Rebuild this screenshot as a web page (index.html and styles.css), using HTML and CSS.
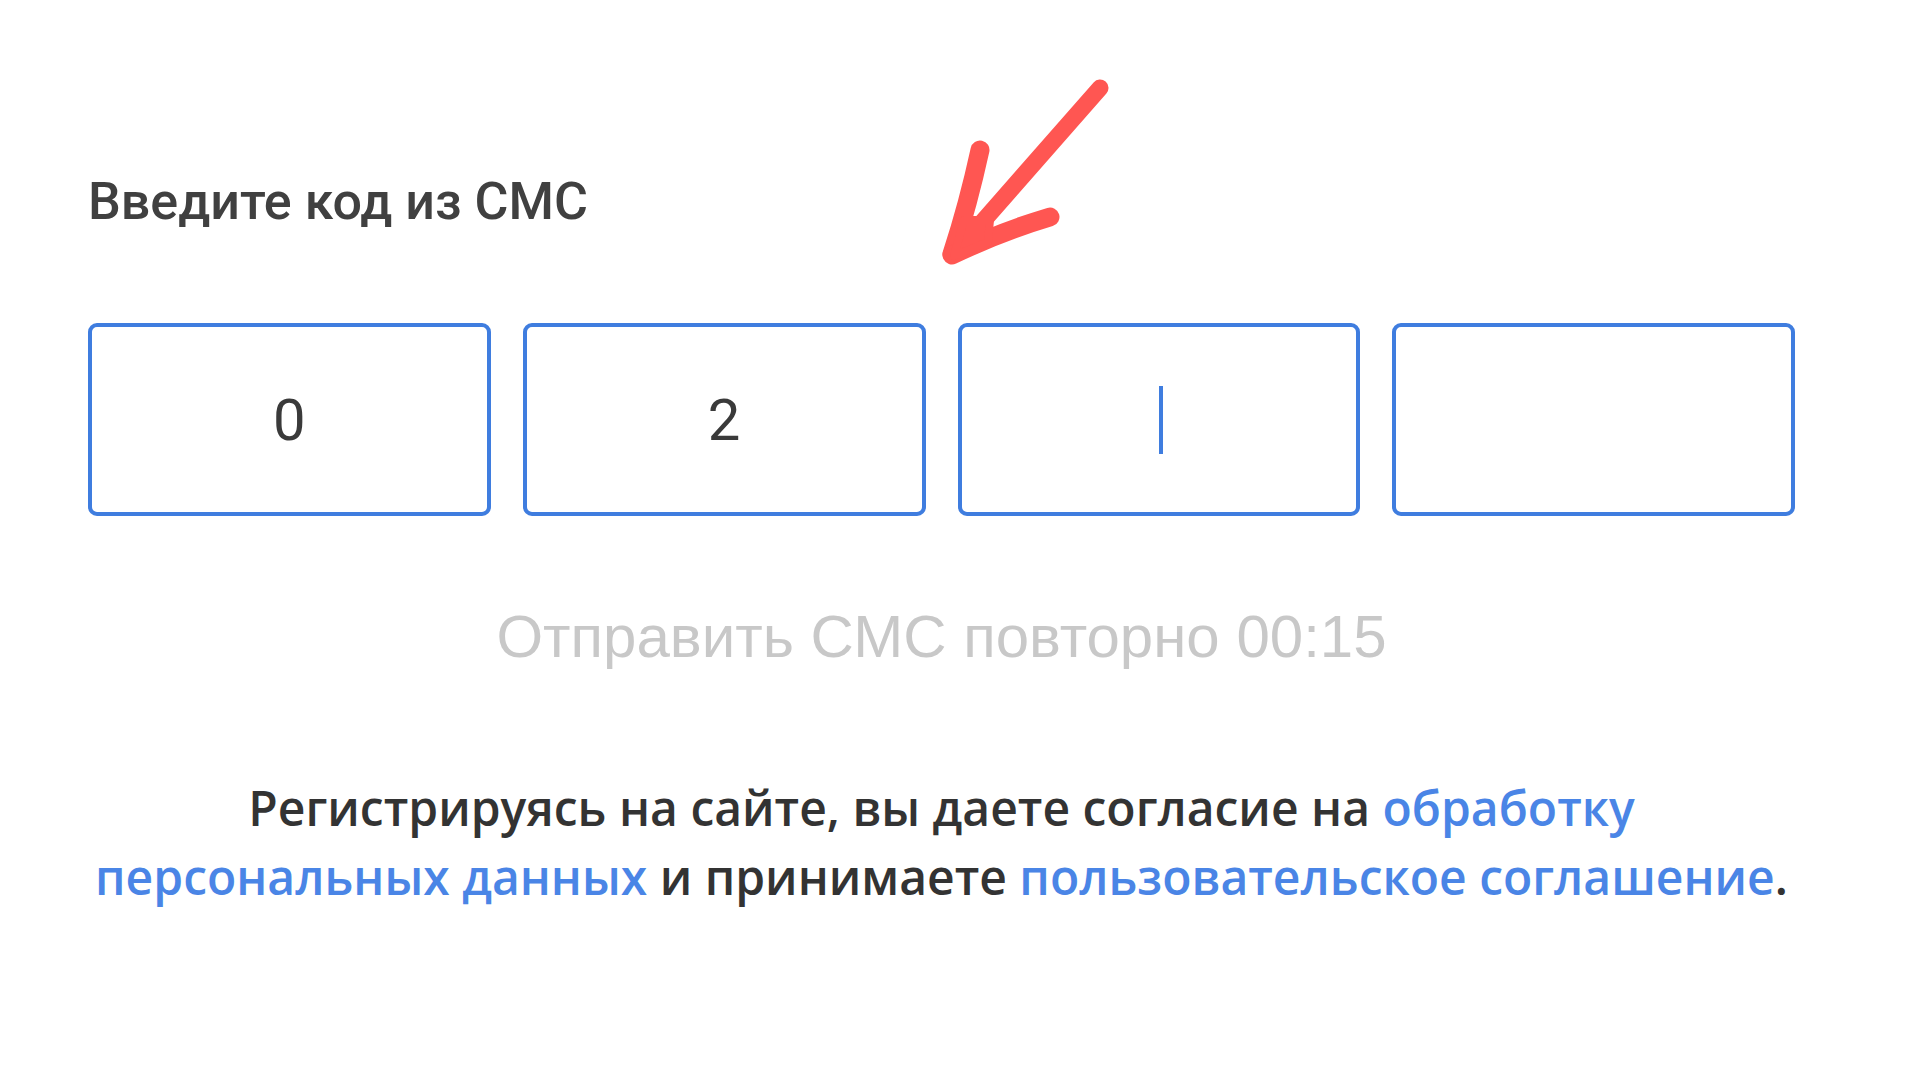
FILE: index.html
```html
<!DOCTYPE html>
<html>
<head>
    <title>Подтверждение номера</title>
    <link rel="stylesheet" href="styles.css">
</head>
<body>
    <div class="sms-form">
        <div class="label">Введите код из СМС</div>
        <div class="code-inputs">
            <div class="code-cell">0</div>
            <div class="code-cell">2</div>
            <div class="code-cell active"><span class="caret"></span></div>
            <div class="code-cell"></div>
        </div>
        <div class="resend">Отправить СМС повторно 00:15</div>
        <p class="agreement">
            Регистрируясь на сайте, вы даете согласие на <a href="#">обработку</a><br>
            <a href="#">персональных данных</a> и принимаете <a href="#">пользовательское соглашение</a>.
        </p>

        <!-- hint arrow -->
        <svg class="hint-arrow" width="200" height="210" viewBox="0 0 200 210">
            <path d="M170 18 Q 100 98 26 182" />
            <path class="barb" d="M50 80 Q 38 135 22 184" />
            <path class="barb" d="M120 147 Q 70 162 22 185" />
            <path class="head" d="M24 186 L 34 150 L 60 150 L 58 172 Z" />
        </svg>
    </div>
</body>
</html>
```

FILE: styles.css
```css
body {
    margin: 0;
    background: #fff;
    font-family: Roboto, "Liberation Sans", sans-serif;
}
.sms-form {
    position: relative;
    width: 1707px;
    padding: 172px 0 0 88px;
}
.label {
    font-size: 52px;
    line-height: 60px;
    font-weight: 500;
    color: #404040;
}
.code-inputs {
    display: grid;
    grid-template-columns: repeat(4, 1fr);
    gap: 32px;
    margin-top: 91px;
}
.code-cell {
    height: 193px;
    box-sizing: border-box;
    border: 4px solid #3f7ddf;
    border-radius: 9px;
    display: flex;
    align-items: center;
    justify-content: center;
    font-size: 58px;
    color: #3a3a3a;
}
.caret {
    width: 4px;
    height: 68px;
    margin-left: 4px;
    background: #3f7ddf;
}
.resend {
    margin-top: 86px;
    text-align: center;
    font-family: "Liberation Sans", Arial, sans-serif;
    font-size: 60px;
    line-height: 70px;
    color: #c8c8c8;
}
.agreement {
    margin: 101px 0 0;
    text-align: center;
    font-family: "Open Sans", sans-serif;
    font-weight: 600;
    font-size: 48px;
    line-height: 69px;
    color: #333;
}
.agreement a {
    color: #4a85e6;
    text-decoration: none;
}
.hint-arrow {
    position: absolute;
    left: 930px;
    top: 70px;
}
.hint-arrow path {
    fill: none;
    stroke: #ff5652;
    stroke-width: 17;
    stroke-linecap: round;
    stroke-linejoin: round;
}
.hint-arrow .barb {
    stroke-width: 19;
}
.hint-arrow .head {
    fill: #ff5652;
    stroke-width: 8;
}
```
